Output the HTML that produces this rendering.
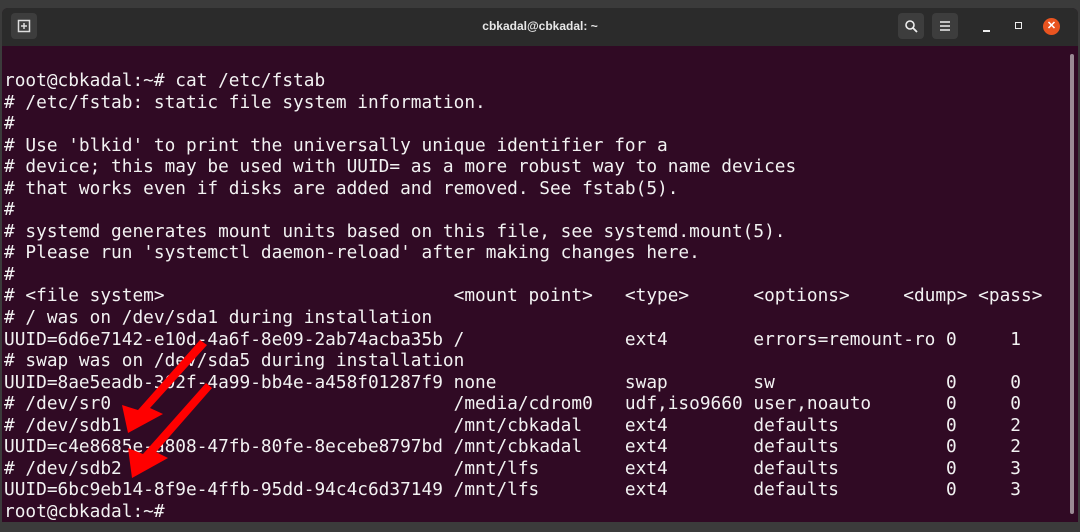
<!DOCTYPE html>
<html><head><style>
html,body{margin:0;padding:0;width:1080px;height:532px;overflow:hidden;background:#3b3b3b;}
.win{position:absolute;left:2px;top:8px;width:1076px;height:514px;background:#300a24;border-radius:6px 6px 0 0;overflow:hidden;}
.tb{position:absolute;left:0;top:0;width:100%;height:38px;background:#2b2b2b;}
.title{position:absolute;left:0;right:0;top:11px;text-align:center;color:#e8e8e8;font:bold 12px "Liberation Sans",sans-serif;}
.btn{position:absolute;top:5px;width:26px;height:26px;background:#3d3d3d;border-radius:4px;}
pre{position:absolute;left:2px;top:62px;margin:0;color:#f2f2f2;font:17.8px/21.55px "DejaVu Sans Mono","Liberation Mono",monospace;}
.sb{position:absolute;right:4px;top:46px;width:4px;height:460px;background:#9a8a94;border-radius:2px;}
</style></head><body>
<div class="win">
<div class="tb">
<div class="btn" style="left:9px"></div>
<svg style="position:absolute;left:15px;top:11px" width="14" height="14"><rect x="1.5" y="1.5" width="11" height="11" fill="none" stroke="#ddd" stroke-width="1.5"/><path d="M7 4v6M4 7h6" stroke="#ddd" stroke-width="1.5"/></svg>
<div class="title">cbkadal@cbkadal: ~</div>
<div class="btn" style="left:896px"></div>
<svg style="position:absolute;left:902px;top:11px" width="14" height="14"><circle cx="6" cy="6" r="4" fill="none" stroke="#eee" stroke-width="1.6"/><path d="M9 9l4 4" stroke="#eee" stroke-width="1.8"/></svg>
<div class="btn" style="left:930px"></div>
<svg style="position:absolute;left:937px;top:12px" width="12" height="12"><path d="M1 2h10M1 6h10M1 10h10" stroke="#eee" stroke-width="1.5"/></svg>
<div style="position:absolute;left:981px;top:22px;width:7px;height:2px;background:#eee"></div>
<div style="position:absolute;left:1013px;top:14px;width:5px;height:5px;border:1.5px solid #eee"></div>
<div style="position:absolute;left:1041px;top:10px;width:17px;height:17px;border-radius:50%;background:#e95420;color:#fff;font:bold 11px/17px 'Liberation Sans',sans-serif;text-align:center">✕</div>
</div>
<div class="sb"></div>
<pre>root@cbkadal:~# cat /etc/fstab
# /etc/fstab: static file system information.
#
# Use 'blkid' to print the universally unique identifier for a
# device; this may be used with UUID= as a more robust way to name devices
# that works even if disks are added and removed. See fstab(5).
#
# systemd generates mount units based on this file, see systemd.mount(5).
# Please run 'systemctl daemon-reload' after making changes here.
#
# &lt;file system&gt;                           &lt;mount point&gt;   &lt;type&gt;      &lt;options&gt;     &lt;dump&gt; &lt;pass&gt;
# / was on /dev/sda1 during installation
UUID=6d6e7142-e10d-4a6f-8e09-2ab74acba35b /               ext4        errors=remount-ro 0     1
# swap was on /dev/sda5 during installation
UUID=8ae5eadb-302f-4a99-bb4e-a458f01287f9 none            swap        sw                0     0
# /dev/sr0                                /media/cdrom0   udf,iso9660 user,noauto       0     0
# /dev/sdb1                               /mnt/cbkadal    ext4        defaults          0     2
UUID=c4e8685e-a808-47fb-80fe-8ecebe8797bd /mnt/cbkadal    ext4        defaults          0     2
# /dev/sdb2                               /mnt/lfs        ext4        defaults          0     3
UUID=6bc9eb14-8f9e-4ffb-95dd-94c4c6d37149 /mnt/lfs        ext4        defaults          0     3
root@cbkadal:~#</pre>
</div>
<svg style="position:absolute;left:0;top:0" width="1080" height="532">
<path d="M200 340 L207 345 L150 408 L163 414 L128 433 L122 405 L138 410 Z" fill="#ff0000"/>
<path d="M206 383 L212 388 L156 452 L168 458 L132 478 L128 448 L143 454 Z" fill="#ff0000"/>
</svg>
</body></html>
